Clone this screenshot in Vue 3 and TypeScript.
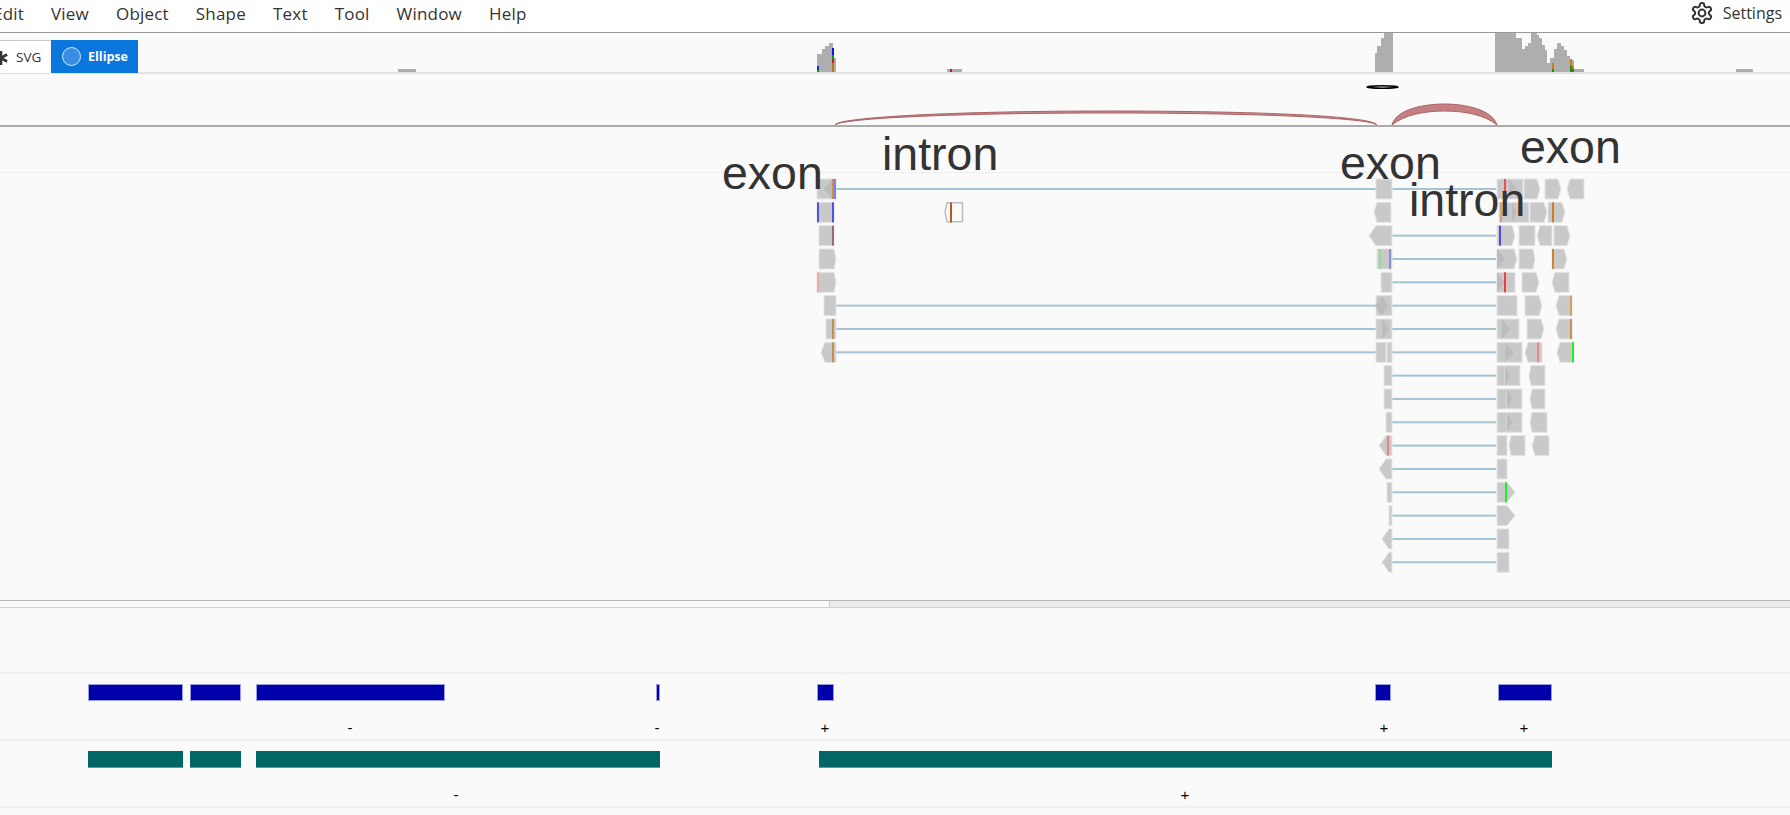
<template>
  <div class="app">
    <header class="menubar">
      <nav class="menu">
        <span v-for="item in menuItems" :key="item">{{ item }}</span>
      </nav>
      <div class="settings">
        <svg width="24" height="24" viewBox="0 0 24 24" fill="none" stroke="#333" stroke-width="2" stroke-linecap="round" stroke-linejoin="round">
          <path d="M12.22 2h-.44a2 2 0 0 0-2 2v.18a2 2 0 0 1-1 1.73l-.43.25a2 2 0 0 1-2 0l-.15-.08a2 2 0 0 0-2.73.73l-.22.38a2 2 0 0 0 .73 2.73l.15.1a2 2 0 0 1 1 1.72v.51a2 2 0 0 1-1 1.74l-.15.09a2 2 0 0 0-.73 2.73l.22.38a2 2 0 0 0 2.73.73l.15-.08a2 2 0 0 1 2 0l.43.25a2 2 0 0 1 1 1.73V20a2 2 0 0 0 2 2h.44a2 2 0 0 0 2-2v-.18a2 2 0 0 1 1-1.73l.43-.25a2 2 0 0 1 2 0l.15.08a2 2 0 0 0 2.73-.73l.22-.39a2 2 0 0 0-.73-2.73l-.15-.08a2 2 0 0 1-1-1.74v-.5a2 2 0 0 1 1-1.74l.15-.09a2 2 0 0 0 .73-2.73l-.22-.38a2 2 0 0 0-2.73-.73l-.15.08a2 2 0 0 1-2 0l-.43-.25a2 2 0 0 1-1-1.73V4a2 2 0 0 0-2-2z" />
          <circle cx="12" cy="12" r="3.4" />
        </svg>
        <span>Settings</span>
      </div>
    </header>

    <section class="coverage">
      <svg class="canvas" width="1790" height="39" viewBox="0 33 1790 39">
        <path v-for="(d, i) in coverageShapes" :key="i" :d="d" fill="#aeaeae" />
        <rect v-for="(b, i) in coverageBars" :key="'b' + i" :x="b[0]" :y="b[1]" :width="b[2]" :height="b[3]" :fill="b[4]" />
      </svg>
      <div class="tabs">
        <div class="tab">
          <svg class="star" width="18" height="18" viewBox="0 0 18 18" stroke="#333" stroke-width="2.6">
            <path d="M9 2v14M2.9 5.5l12.2 7M2.9 12.5l12.2-7" />
          </svg>
          <span>SVG</span>
        </div>
        <div class="tab active">
          <span class="circle"></span>
          <span>Ellipse</span>
        </div>
      </div>
    </section>

    <section class="junctions">
      <svg class="canvas" width="1790" height="51" viewBox="0 74 1790 51">
        <ellipse cx="1382.5" cy="87" rx="15.5" ry="1.3" fill="none" stroke="#000" stroke-width="1.6" />
        <path d="M835 125C838 117 960 111 1107 111C1260 111 1372 116 1377 125C1370 118 1260 113 1107 113C960 113 842 118 835 125Z" fill="#c58a8c" stroke="#ad6166" stroke-width="1" />
        <path d="M1392 125C1396 109 1425 104 1444.5 104C1464 104 1492 109 1497 125C1485 115 1465 111 1444.5 111C1424 111 1404 115 1392 125Z" fill="#c58083" stroke="#ad6166" stroke-width="1" />
      </svg>
    </section>

    <section class="pileup">
      <div class="pileup-head"></div>
      <svg class="canvas reads" width="1790" height="427" viewBox="0 173 1790 427">
        <g v-for="(row, i) in readRows" :key="i">
          <rect v-for="(l, j) in row.lines" :key="'l' + j" :x="l[0]" :y="rowY(i) - 1" :width="l[1] - l[0]" height="2" fill="#a6c3d3" />
          <polygon v-for="(r, j) in row.reads" :key="'r' + j" :points="readPoints(r, rowY(i))" fill="#c9c9c9" stroke="#e4e4e4" stroke-width="1" />
          <polygon v-for="(d, j) in row.darks" :key="'d' + j" :points="arrowPoints(d, rowY(i))" fill="#bcbcbc" />
          <rect v-for="(b, j) in row.bars" :key="'b' + j" :x="b[0]" :y="rowY(i) - 10" width="2" height="20" :fill="b[1]" />
        </g>
        <polygon points="945,212.3 947,202.8 962.5,202.8 962.5,221.8 947,221.8" fill="none" stroke="#bdbdbd" stroke-width="1.5" />
        <rect x="950" y="202.5" width="2" height="20" fill="#b9581c" />
        <text v-for="t in labels" :key="t.x" :x="t.x" :y="t.y" class="label">{{ t.text }}</text>
      </svg>
    </section>

    <div class="scrollbar"><div class="thumb"></div></div>

    <div class="track empty"></div>

    <section class="track">
      <div class="bar-row">
        <span v-for="s in exons" :key="s[0]" class="seg blue" :style="segStyle(s)"></span>
      </div>
      <span v-for="m in exonMarks" :key="m[0]" class="mark" :style="{ left: m[0] + 'px' }">{{ m[1] }}</span>
    </section>

    <section class="track">
      <div class="bar-row">
        <span v-for="s in transcripts" :key="s[0]" class="seg teal" :style="segStyle(s)"></span>
      </div>
      <span v-for="m in transcriptMarks" :key="m[0]" class="mark" :style="{ left: m[0] + 'px' }">{{ m[1] }}</span>
    </section>
  </div>
</template>

<script setup lang="ts">
type Read = [number, number, number]
type Bar = [number, string]
type Span = [number, number]

interface ReadRow {
  reads: Read[]
  darks?: Read[]
  bars?: Bar[]
  lines?: Span[]
}

const menuItems = ['Edit', 'View', 'Object', 'Shape', 'Text', 'Tool', 'Window', 'Help']

const ORANGE = '#c98f4a'
const RED = '#f04f4f'

// coverage histogram, each step is [x, top]
const steps = (points: number[][], end: number) => {
  let d = `M${points[0][0]} 72`
  points.forEach((p, i) => {
    const next = i + 1 < points.length ? points[i + 1][0] : end
    d += `V${p[1]}H${next}`
  })
  return d + 'V72Z'
}

const coverageShapes = [
  'M398 69H416V72H398Z',
  'M947 69H962V72H947Z',
  'M1736 69H1753V72H1736Z',
  steps([[817, 54], [822, 49], [825, 46], [829, 43], [833, 58]], 836),
  steps([[1375, 53], [1377, 46], [1381, 38], [1384, 33]], 1393),
  steps([[1495, 33], [1516, 38], [1522, 49], [1525, 46], [1528, 43], [1531, 33], [1537, 35], [1539, 38], [1542, 45], [1545, 50], [1547, 63], [1550, 58], [1554, 49], [1557, 43], [1561, 46], [1564, 50], [1567, 56], [1570, 60], [1574, 69]], 1584),
]

const coverageBars: [number, number, number, number, string][] = [
  [817, 66, 2, 4, '#2222dd'],
  [817, 70, 2, 2, '#0a9a1a'],
  [832, 48, 2, 7, '#1414e0'],
  [832, 55, 2, 4, '#0a9a1a'],
  [832, 59, 2, 4, '#cc1a1a'],
  [832, 63, 2, 9, '#b97a14'],
  [950, 69, 2, 3, '#cc1a1a'],
  [1552, 63, 2, 6, '#d17a14'],
  [1552, 69, 2, 3, '#0a9a1a'],
  [1570, 59, 2, 7, '#d17a14'],
  [1570, 66, 2, 6, '#0a9a1a'],
  [1572, 66, 2, 3, '#d17a14'],
  [1572, 69, 2, 3, '#0a9a1a'],
]

// reads: [start, end, tip] with a positive tip pointing right, negative left
const readRows: ReadRow[] = [
  {
    reads: [[817, 836, 0], [1376, 1392, 0], [1497, 1523, 0], [1524, 1540, 3], [1545, 1561, 3], [1567, 1584, -3]],
    darks: [[824, 832, -1], [1509, 1517, 1]],
    bars: [[832, ORANGE], [834, '#8080e4'], [1504, RED]],
    lines: [[836, 1376], [1392, 1496]],
  },
  {
    reads: [[817, 834, 0], [1374, 1391, -3], [1499, 1529, 0], [1530, 1547, 3], [1548, 1565, 3]],
    darks: [[1512, 1517, 1]],
    bars: [[817, '#5050f0'], [832, '#5050f0'], [1500, '#cfa67c'], [1552, '#d07a2a']],
  },
  {
    reads: [[819, 834, 0], [1369, 1392, -7], [1497, 1515, 3], [1519, 1535, 0], [1537, 1552, -3], [1554, 1570, 3]],
    bars: [[832, '#a06868'], [1499, '#4a4ae8']],
    lines: [[1392, 1496]],
  },
  {
    reads: [[819, 836, 2], [1377, 1392, 0], [1497, 1517, 3], [1519, 1535, 2], [1552, 1567, 3]],
    darks: [[1497, 1505, 1]],
    bars: [[1379, '#8ee08e'], [1389, '#8c8ce0'], [1552, '#cf8530']],
    lines: [[1392, 1496]],
  },
  {
    reads: [[817, 836, 2], [1381, 1392, 0], [1497, 1515, 0], [1522, 1539, 3], [1552, 1569, -3]],
    darks: [[1497, 1505, 1]],
    bars: [[817, '#f5a6a6'], [1504, '#f03c3c']],
    lines: [[1392, 1496]],
  },
  {
    reads: [[824, 836, 0], [1376, 1392, 0], [1497, 1517, 0], [1525, 1542, 3], [1556, 1572, -3]],
    darks: [[1375, 1382, -1], [1382, 1388, 1]],
    bars: [[1570, '#d8a060']],
    lines: [[836, 1376], [1392, 1496]],
  },
  {
    reads: [[826, 836, 0], [1376, 1392, 0], [1497, 1519, 0], [1527, 1544, 3], [1556, 1572, -3]],
    darks: [[1382, 1389, 1], [1502, 1510, 1]],
    bars: [[832, ORANGE], [1570, '#c8904c']],
    lines: [[836, 1376], [1392, 1496]],
  },
  {
    reads: [[821, 836, -4], [1376, 1386, 0], [1387, 1392, 0], [1497, 1522, 0], [1525, 1542, -3], [1557, 1574, -3]],
    darks: [[1505, 1514, 1]],
    bars: [[832, ORANGE], [1537, '#e88c8c'], [1572, '#22ee22']],
    lines: [[836, 1376], [1392, 1496]],
  },
  {
    reads: [[1384, 1392, 0], [1497, 1510, 5], [1505, 1520, 0], [1529, 1545, -2]],
    darks: [[1505, 1510, 1]],
    lines: [[1392, 1496]],
  },
  {
    reads: [[1384, 1392, 0], [1497, 1512, 5], [1507, 1522, 0], [1530, 1545, -2]],
    darks: [[1507, 1512, 1]],
    lines: [[1392, 1496]],
  },
  {
    reads: [[1386, 1392, 0], [1497, 1512, 5], [1507, 1522, 0], [1530, 1547, -2]],
    darks: [[1507, 1512, 1]],
    lines: [[1392, 1496]],
  },
  {
    reads: [[1379, 1392, -7], [1497, 1507, 0], [1509, 1525, -2], [1532, 1549, -3]],
    bars: [[1387, '#ee8080']],
    lines: [[1392, 1496]],
  },
  {
    reads: [[1379, 1392, -7], [1497, 1507, 0]],
    lines: [[1392, 1496]],
  },
  {
    reads: [[1387, 1392, 0], [1497, 1515, 8]],
    bars: [[1505, '#22ee22']],
    lines: [[1392, 1496]],
  },
  {
    reads: [[1389, 1392, 0], [1497, 1515, 8]],
    lines: [[1392, 1496]],
  },
  {
    reads: [[1382, 1392, -7], [1497, 1509, 0]],
    lines: [[1392, 1496]],
  },
  {
    reads: [[1382, 1392, -7], [1497, 1509, 0]],
    lines: [[1392, 1496]],
  },
]

const rowY = (i: number) => 189 + i * 23.33

const readPoints = (r: Read, y: number) => {
  const [a, b, tip] = r
  if (tip > 0) return `${a},${y - 10} ${b - tip},${y - 10} ${b},${y} ${b - tip},${y + 10} ${a},${y + 10}`
  if (tip < 0) return `${a},${y} ${a - tip},${y - 10} ${b},${y - 10} ${b},${y + 10} ${a - tip},${y + 10}`
  return `${a},${y - 10} ${b},${y - 10} ${b},${y + 10} ${a},${y + 10}`
}

const arrowPoints = (d: Read, y: number) => {
  const [a, b, dir] = d
  return dir > 0 ? `${a},${y - 10} ${b},${y} ${a},${y + 10}` : `${b},${y - 10} ${a},${y} ${b},${y + 10}`
}

const labels = [
  { text: 'exon', x: 722, y: 189 },
  { text: 'intron', x: 882, y: 170 },
  { text: 'exon', x: 1340, y: 179 },
  { text: 'intron', x: 1409, y: 216 },
  { text: 'exon', x: 1520, y: 163 },
]

const exons: Span[] = [[88, 183], [190, 241], [256, 445], [656, 660], [817, 834], [1375, 1391], [1498, 1552]]
const transcripts: Span[] = [[88, 183], [190, 241], [256, 660], [819, 1552]]
const exonMarks: [number, string][] = [[350, '-'], [657, '-'], [825, '+'], [1384, '+'], [1524, '+']]
const transcriptMarks: [number, string][] = [[456, '-'], [1185, '+']]

const segStyle = (s: Span) => ({ left: s[0] + 'px', width: s[1] - s[0] + 'px' })
</script>

<style scoped>
.app {
  width: 1790px;
  height: 815px;
  overflow: hidden;
  display: flex;
  flex-direction: column;
  background: #fafafa;
  font-family: "Open Sans", "Noto Sans", sans-serif;
  color: #333;
}

.canvas {
  display: block;
}

.menubar {
  flex: none;
  height: 32px;
  box-sizing: content-box;
  display: flex;
  justify-content: space-between;
  align-items: flex-start;
  background: #fff;
  border-bottom: 1px solid #999;
}

.menu {
  display: flex;
  gap: 27px;
  margin-left: -7px;
  margin-top: 2px;
  font-size: 17px;
  letter-spacing: 0.2px;
}

.settings {
  display: flex;
  align-items: center;
  gap: 9px;
  height: 25px;
  padding-right: 8px;
  font-size: 16px;
}

.coverage {
  flex: none;
  position: relative;
  height: 39px;
  border-bottom: 2px solid #e2e2e2;
}

.tabs {
  position: absolute;
  left: 0;
  bottom: -1px;
  display: flex;
  height: 33px;
  font-size: 13.5px;
}

.tab {
  display: flex;
  align-items: center;
  width: 51px;
  padding-left: 16px;
  box-sizing: border-box;
  position: relative;
  background: #fff;
  border-top: 1px solid #ccc;
  color: #333;
}

.star {
  position: absolute;
  left: -8px;
  top: 8px;
}

.tab.active {
  width: 87px;
  padding-left: 11px;
  gap: 7px;
  background: #0b76db;
  border-top: 0;
  color: #fff;
  font-size: 12.5px;
  font-weight: 700;
}

.circle {
  width: 17px;
  height: 17px;
  border: 1px solid #d6e8fa;
  border-radius: 50%;
  background: #3b8ee3;
}

.junctions {
  flex: none;
  height: 51px;
  border-bottom: 2px solid #aaa;
}

.pileup {
  flex: none;
  height: 473px;
  border-bottom: 1px solid #b5b5b5;
}

.pileup-head {
  height: 45px;
  border-bottom: 1px solid #f0f0f0;
}

.reads {
  overflow: visible;
}

.label {
  font-family: "Liberation Sans", Arial, sans-serif;
  font-size: 46.5px;
  fill: #333;
}

.scrollbar {
  flex: none;
  position: relative;
  height: 6px;
  border-bottom: 1px solid #d4d4d4;
}

.thumb {
  position: absolute;
  left: 829px;
  right: 0;
  top: 0;
  bottom: 0;
  background: #ebebeb;
  border-left: 1px solid #ccc;
}

.track {
  flex: none;
  position: relative;
  height: 65px;
  border-bottom: 2px solid #f0f0f0;
}

.track.empty {
  height: 64px;
}

.bar-row {
  position: relative;
  height: 17px;
  margin-top: 10px;
}

.seg {
  position: absolute;
  top: 0;
  bottom: 0;
}

.seg.blue {
  background: #0000aa;
  border: 1px solid #9c9ce0;
  box-sizing: border-box;
}

.seg.teal {
  background: #006666;
  border-bottom: 1px solid #5a9c9c;
  box-sizing: border-box;
}

.mark {
  position: absolute;
  top: 45px;
  transform: translateX(-50%);
  font-family: "Liberation Sans", Arial, sans-serif;
  font-size: 15px;
  color: #000;
}
</style>

<style>
html,
body {
  margin: 0;
  overflow: hidden;
}
</style>
